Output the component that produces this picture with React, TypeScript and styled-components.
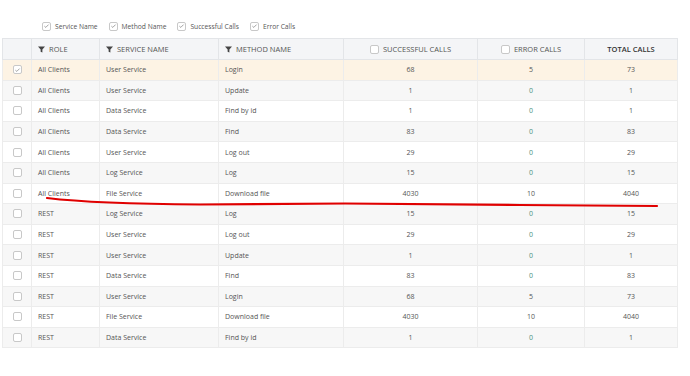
import React from "react";
import styled, { createGlobalStyle } from "styled-components";

const GlobalStyle = createGlobalStyle`
  html, body {
    margin: 0;
    padding: 0;
    background: #ffffff;
    font-family: "Open Sans", "Noto Sans", sans-serif;
  }
`;

type Row = {
  role: string;
  service: string;
  method: string;
  ok: number;
  err: number;
  total: number;
};

const rows: Row[] = [
  { role: "All Clients", service: "User Service", method: "Login", ok: 68, err: 5, total: 73 },
  { role: "All Clients", service: "User Service", method: "Update", ok: 1, err: 0, total: 1 },
  { role: "All Clients", service: "Data Service", method: "Find by id", ok: 1, err: 0, total: 1 },
  { role: "All Clients", service: "Data Service", method: "Find", ok: 83, err: 0, total: 83 },
  { role: "All Clients", service: "User Service", method: "Log out", ok: 29, err: 0, total: 29 },
  { role: "All Clients", service: "Log Service", method: "Log", ok: 15, err: 0, total: 15 },
  { role: "All Clients", service: "File Service", method: "Download file", ok: 4030, err: 10, total: 4040 },
  { role: "REST", service: "Log Service", method: "Log", ok: 15, err: 0, total: 15 },
  { role: "REST", service: "User Service", method: "Log out", ok: 29, err: 0, total: 29 },
  { role: "REST", service: "User Service", method: "Update", ok: 1, err: 0, total: 1 },
  { role: "REST", service: "Data Service", method: "Find", ok: 83, err: 0, total: 83 },
  { role: "REST", service: "User Service", method: "Login", ok: 68, err: 5, total: 73 },
  { role: "REST", service: "File Service", method: "Download file", ok: 4030, err: 10, total: 4040 },
  { role: "REST", service: "Data Service", method: "Find by id", ok: 1, err: 0, total: 1 },
];

const toggles = ["Service Name", "Method Name", "Successful Calls", "Error Calls"];

const Check = ({ checked }: { checked?: boolean }) => (
  <Box $checked={checked}>
    {checked && (
      <svg width="8" height="8" viewBox="0 0 8 8">
        <path d="M1.6 4.2 L3.2 5.6 L6.4 2.4" fill="none" stroke="#888" strokeWidth="0.9" />
      </svg>
    )}
  </Box>
);

const Funnel = () => (
  <svg width="7" height="7" viewBox="0 0 8 8">
    <path d="M0 0.5 H8 L5 4 V7.5 L3 6.5 V4 Z" fill="#444" />
  </svg>
);

export default function App() {
  return (
    <Page>
      <GlobalStyle />
      <Toggles>
        {toggles.map((t) => (
          <Toggle key={t}>
            <Check checked />
            {t}
          </Toggle>
        ))}
      </Toggles>
      <TableWrap>
        <Table>
          <colgroup>
            <col style={{ width: 29 }} />
            <col style={{ width: 68 }} />
            <col style={{ width: 119 }} />
            <col style={{ width: 125 }} />
            <col style={{ width: 134 }} />
            <col style={{ width: 107 }} />
            <col style={{ width: 93 }} />
          </colgroup>
          <thead>
            <tr>
              <Th />
              <Th>
                <HeadLabel>
                  <Funnel />
                  ROLE
                </HeadLabel>
              </Th>
              <Th>
                <HeadLabel>
                  <Funnel />
                  SERVICE NAME
                </HeadLabel>
              </Th>
              <Th>
                <HeadLabel>
                  <Funnel />
                  METHOD NAME
                </HeadLabel>
              </Th>
              <Th $center>
                <HeadLabel $center>
                  <Check />
                  SUCCESSFUL CALLS
                </HeadLabel>
              </Th>
              <Th $center>
                <HeadLabel $center>
                  <Check />
                  ERROR CALLS
                </HeadLabel>
              </Th>
              <Th $center $strong>
                TOTAL CALLS
              </Th>
            </tr>
          </thead>
          <tbody>
            {rows.map((r, i) => (
              <Tr key={i} $tone={i === 0 ? "selected" : i % 2 ? "gray" : "white"}>
                <Td $center>
                  <Check checked={i === 0} />
                </Td>
                <Td>{r.role}</Td>
                <Td>{r.service}</Td>
                <Td>{r.method}</Td>
                <Td $center>{r.ok}</Td>
                <Td $center $teal={r.err === 0}>
                  {r.err}
                </Td>
                <Td $center>{r.total}</Td>
              </Tr>
            ))}
          </tbody>
        </Table>
        <Scribble viewBox="0 0 690 376" width="690" height="376">
          <path
            d="M47 198 C 80 202, 120 204, 200 204.5 L 345 203.5 L 520 205 L 657 206"
            fill="none"
            stroke="#e00000"
            strokeWidth="2.2"
            strokeLinecap="round"
          />
        </Scribble>
      </TableWrap>
    </Page>
  );
}

const Page = styled.div`
  position: relative;
  width: 690px;
  height: 376px;
  padding-top: 19px;
  box-sizing: border-box;
`;

const Toggles = styled.div`
  display: flex;
  align-items: center;
  gap: 11px;
  padding-left: 42px;
  height: 14px;
  margin-bottom: 5px;
`;

const Toggle = styled.label`
  display: flex;
  align-items: center;
  gap: 4px;
  font-size: 6.7px;
  color: #555;
`;

const Box = styled.span<{ $checked?: boolean }>`
  display: inline-flex;
  align-items: center;
  justify-content: center;
  width: 9px;
  height: 9px;
  border: 1px solid #c8c8c8;
  border-radius: 2px;
  background: #fff;
  box-sizing: border-box;
  flex: none;
  vertical-align: middle;
`;

const TableWrap = styled.div`
  padding-left: 2px;
`;

const Table = styled.table`
  border-collapse: collapse;
  table-layout: fixed;
  width: 675px;
  border: 1px solid #e4e6e8;
  font-size: 7px;
  color: #555;
`;

const Th = styled.th<{ $center?: boolean; $strong?: boolean }>`
  height: 20px;
  padding: 0 6px;
  background: #f4f5f7;
  border: 1px solid #e3e5e8;
  text-align: ${(p) => (p.$center ? "center" : "left")};
  font-size: 7.5px;
  font-weight: ${(p) => (p.$strong ? 600 : 400)};
  color: ${(p) => (p.$strong ? "#333" : "#555")};
  white-space: nowrap;
`;

const HeadLabel = styled.span<{ $center?: boolean }>`
  display: flex;
  align-items: center;
  justify-content: ${(p) => (p.$center ? "center" : "flex-start")};
  gap: 4px;
`;

const tones = {
  selected: "#fdf3e4",
  gray: "#f7f7f7",
  white: "#ffffff",
};

const Tr = styled.tr<{ $tone: keyof typeof tones }>`
  background: ${(p) => tones[p.$tone]};
`;

const Td = styled.td<{ $center?: boolean; $teal?: boolean }>`
  height: 19.6px;
  padding: 0 6px;
  border: 1px solid #ececec;
  text-align: ${(p) => (p.$center ? "center" : "left")};
  color: ${(p) => (p.$teal ? "#4a9282" : "#555")};
  white-space: nowrap;
  line-height: 1;
`;

const Scribble = styled.svg`
  position: absolute;
  left: 0;
  top: 0;
  pointer-events: none;
`;
